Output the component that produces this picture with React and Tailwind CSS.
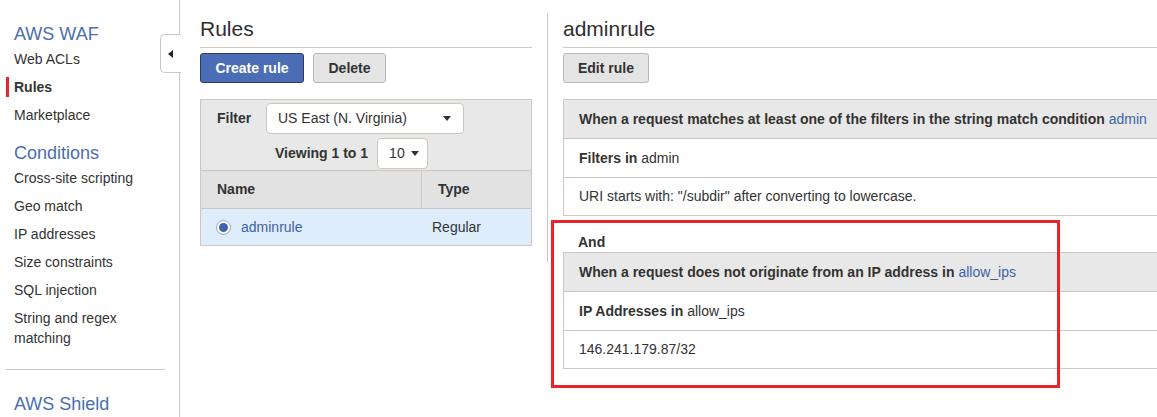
import React from "react";

const NAV_WAF = [
  { label: "Web ACLs" },
  { label: "Rules", active: true },
  { label: "Marketplace" },
];

const NAV_CONDITIONS = [
  "Cross-site scripting",
  "Geo match",
  "IP addresses",
  "Size constraints",
  "SQL injection",
  "String and regex matching",
];

const Caret = () => (
  <span className="inline-block w-0 h-0 border-x-[4px] border-x-transparent border-t-[5px] border-t-[#333]" />
);

const NavItem = ({ label, active }) => (
  <div className="flex items-stretch py-[4px] leading-[20px]">
    <span className={`w-[3px] shrink-0 ${active ? "bg-[#e8262a]" : "bg-transparent"}`} />
    <span className={`pl-[5px] pr-[12px] ${active ? "font-bold" : ""}`}>{label}</span>
  </div>
);

const SideMenu = () => (
  <div className="relative w-[180px] h-full shrink-0 border-r border-[#cfc7c0] pt-[23px] pl-[6px]">
    <div className="pl-[8px] text-[18px] leading-[22px] text-[#4a6eb0]">AWS WAF</div>
    {NAV_WAF.map((item) => (
      <NavItem key={item.label} label={item.label} active={item.active} />
    ))}

    <div className="mt-[13px] pl-[8px] text-[18px] leading-[22px] text-[#4a6eb0]">Conditions</div>
    {NAV_CONDITIONS.map((label) => (
      <NavItem key={label} label={label} />
    ))}

    <div className="mt-[17px] w-[159px] border-t border-[#cfc7c0]" />
    <div className="mt-[23px] pl-[8px] text-[18px] leading-[22px] text-[#4a6eb0]">AWS Shield</div>

    {/* collapse tab */}
    <div className="absolute left-[160px] top-[34px] w-[21px] h-[39px] bg-white border border-r-0 border-[#cfc7c0] rounded-l-[5px] flex items-center justify-center">
      <span className="w-0 h-0 border-y-[4px] border-y-transparent border-r-[5px] border-r-[#222] mr-[2px]" />
    </div>
  </div>
);

const PageTitle = ({ children }) => (
  <div className="pt-[13px] pb-[2px] border-b border-[#cfc7c0] text-[21px] leading-[32px] text-[#2e2e2e]">
    {children}
  </div>
);

const GrayButton = ({ children, className = "" }) => (
  <button
    className={`h-[30px] rounded-[3px] border border-[#bdb8b4] bg-[#e4e4e4] font-bold text-[#333] text-[14px] ${className}`}
  >
    {children}
  </button>
);

const RulesPanel = () => (
  <div className="w-[367px] shrink-0 pl-[20px] pr-[15px]">
    <PageTitle>Rules</PageTitle>

    <div className="mt-[5px] flex gap-[9px]">
      <button className="h-[30px] w-[104px] rounded-[3px] border border-[#2c3e63] bg-[#4a6db5] text-white font-bold text-[14px]">
        Create rule
      </button>
      <GrayButton className="w-[73px]">Delete</GrayButton>
    </div>

    <div className="mt-[16px] border border-[#cfc7c0]">
      {/* filter */}
      <div className="bg-[#e8e8e8] pt-[3px] pb-[1px]">
        <div className="flex items-center">
          <span className="pl-[16px] w-[65px] font-bold">Filter</span>
          <div className="w-[198px] h-[31px] bg-white border border-[#cfc7c0] rounded-[4px] flex items-center justify-between pl-[11px] pr-[12px]">
            <span>US East (N. Virginia)</span>
            <Caret />
          </div>
        </div>
        <div className="mt-[4px] flex items-center pl-[74px]">
          <span className="font-bold">Viewing 1 to 1</span>
          <div className="ml-[9px] w-[51px] h-[31px] bg-white border border-[#cfc7c0] rounded-[4px] flex items-center gap-[6px] pl-[11px]">
            <span>10</span>
            <Caret />
          </div>
        </div>
      </div>

      {/* header */}
      <div className="flex h-[38px] border-t border-[#cfc7c0] bg-[#e2e2e2] font-bold">
        <div className="w-[221px] pl-[16px] flex items-center border-r border-[#cfc7c0]">Name</div>
        <div className="flex-1 pl-[16px] flex items-center">Type</div>
      </div>

      {/* row */}
      <div className="flex h-[37px] border-t border-[#cfc7c0] bg-[#deedfb]">
        <div className="w-[221px] pl-[15px] flex items-center gap-[10px]">
          <span className="w-[15px] h-[15px] rounded-full border border-[#9aa4b3] bg-white flex items-center justify-center">
            <span className="w-[9px] h-[9px] rounded-full bg-[#3f64ad]" />
          </span>
          <span className="text-[#3d64a8]">adminrule</span>
        </div>
        <div className="flex-1 pl-[10px] flex items-center">Regular</div>
      </div>
    </div>
  </div>
);

const Row = ({ children, header, last }) => (
  <div
    className={`pl-[15px] flex items-center whitespace-nowrap ${
      header ? "bg-[#e8e8e8] font-bold" : ""
    } ${last ? "h-[37px]" : "h-[39px] border-b border-[#cfc7c0]"}`}
  >
    {children}
  </div>
);

const RuleDetail = () => (
  <div className="pl-[15px] w-[700px] shrink-0">
    <PageTitle>adminrule</PageTitle>

    <div className="mt-[5px]">
      <GrayButton className="w-[86px]">Edit rule</GrayButton>
    </div>

    <div className="mt-[16px] border border-[#cfc7c0] w-[640px]">
      <Row header>
        When a request matches at least one of the filters in the string match condition&nbsp;
        <span className="font-normal text-[#3d64a8]">admin</span>
      </Row>
      <Row>
        <span className="font-bold">Filters in</span>&nbsp;admin
      </Row>
      <Row last>URI starts with: "/subdir" after converting to lowercase.</Row>
    </div>

    <div className="h-[36px] pt-[16px] pl-[15px] leading-[20px] font-bold">And</div>

    <div className="border border-[#cfc7c0] w-[640px]">
      <Row header>
        When a request does not originate from an IP address in&nbsp;
        <span className="font-normal text-[#3d64a8]">allow_ips</span>
      </Row>
      <Row>
        <span className="font-bold">IP Addresses in</span>&nbsp;allow_ips
      </Row>
      <Row last>146.241.179.87/32</Row>
    </div>
  </div>
);

export default function App() {
  return (
    <div
      className="relative flex w-[1157px] h-[417px] overflow-hidden bg-white text-[14px] text-[#333]"
      style={{ fontFamily: '"Liberation Sans", Arial, sans-serif' }}
    >
      <SideMenu />
      <RulesPanel />
      <div className="w-px h-[249px] mt-[13px] shrink-0 bg-[#cfc7c0]" />
      <RuleDetail />

      {/* annotation highlight */}
      <div className="absolute left-[551px] top-[220px] w-[509px] h-[168px] border-[3px] border-[#e8262a]" />
    </div>
  );
}
